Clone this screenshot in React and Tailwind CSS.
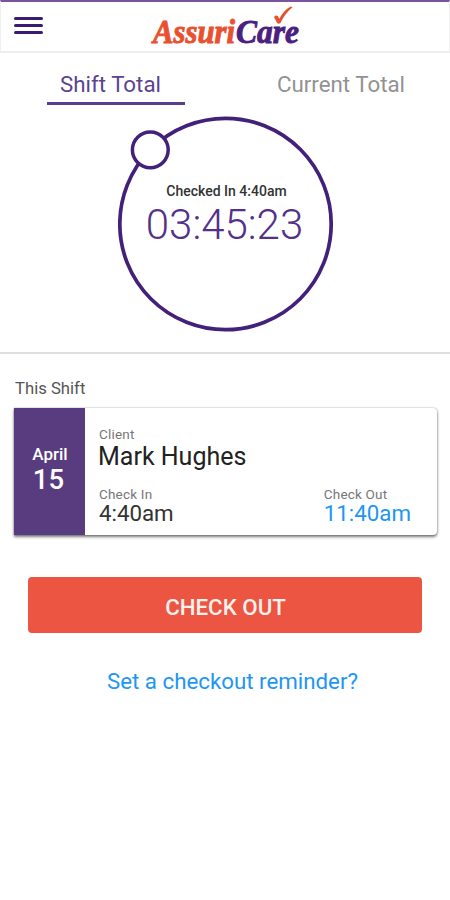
import React from 'react';

const shift = {
  month: 'April',
  day: '15',
  client: 'Mark Hughes',
  checkIn: '4:40am',
  checkOut: '11:40am',
};

const Logo = () => (
  <svg width="154" height="49" viewBox="0 0 154 49" className="overflow-visible">
    <text
      x="5"
      y="38.800"
      textLength="82"
      lengthAdjust="spacingAndGlyphs"
      className="font-['Liberation_Serif',serif] text-[33px] font-bold italic fill-[#e9502f] stroke-[#e9502f] stroke-[0.9]"
    >
      Assuri
    </text>
    <text
      x="88"
      y="38.800"
      textLength="63"
      lengthAdjust="spacingAndGlyphs"
      className="font-['Liberation_Serif',serif] text-[33px] font-bold italic fill-[#4b2080] stroke-[#4b2080] stroke-[0.9]"
    >
      Care
    </text>
    <path d="M126 13 Q128 10.700 129.800 12 L131.300 14.800 Q136 6 142.800 2.600 L144.500 3.200 Q136.500 10 132.500 19 Q130.300 20.800 128.800 18.600 Z" fill="#e9502f" />
  </svg>
);

const Header = () => (
  <header className="flex h-[53px] items-start border-t-2 border-b-2 border-t-[#7b549b] border-b-[#ededed] border-x border-x-[#f0f0f0] bg-white">
    <button className="ml-[13px] mt-[15px] flex w-[29px] flex-col gap-1">
      <span className="h-[3px] w-full rounded-xs bg-[#3a1b73]"></span>
      <span className="h-[3px] w-full rounded-xs bg-[#3a1b73]"></span>
      <span className="h-[3px] w-full rounded-xs bg-[#3a1b73]"></span>
    </button>
    <div className="ml-[105px] mt-[2px]">
      <Logo />
    </div>
  </header>
);

const Tabs = () => (
  <nav className="flex h-[52px] justify-between pl-[47px] pr-[40px] text-[22.300px] leading-[26px]">
    <button className="h-full w-[138px] border-b-[3px] border-[#593d8c] pt-[13px] pr-[11px] text-center text-[#5c4390]">
      Shift Total
    </button>
    <button className="h-full w-[138px] pt-[10px] text-center text-[#929292]">Current Total</button>
  </nav>
);

const Timer = () => (
  <section className="grid h-[249px] justify-center border-b-2 border-[#dedede]">
    <svg width="216" height="220" viewBox="0 0 216 220" className="col-start-1 row-start-1 mt-[10px] ml-px" fill="none" stroke="#43207a">
      <circle cx="107.500" cy="109" r="105.700" strokeWidth="3.700" />
      <circle cx="32.300" cy="34.800" r="17.900" strokeWidth="3.500" fill="white" />
    </svg>
    <div className="col-start-1 row-start-1 mt-[78px] text-center">
      <div className="ml-[3px] text-[14px] font-medium leading-4 text-[#333]">Checked In 4:40am</div>
      <div className="mr-px text-[42px] font-light leading-[51px] text-[#54308a]">03:45:23</div>
    </div>
  </section>
);

const Field = ({ label, value, className }) => (
  <div>
    <div className="text-[13.500px] leading-4 tracking-[0.2px] text-[#777]">{label}</div>
    <div className={className}>{value}</div>
  </div>
);

const ShiftCard = () => (
  <div className="ml-[14px] mr-[13px] flex h-[127px] overflow-hidden rounded-r-[4px] bg-white shadow-[0_2px_3px_rgba(0,0,0,0.5),0_0_2px_rgba(0,0,0,0.35)]">
    <div className="flex w-[71px] flex-col items-center bg-[#593c80] pt-[36px] font-medium text-white">
      <div className="ml-px text-[17px] leading-5">{shift.month}</div>
      <div className="mt-[2px] mr-[2px] text-[27.500px] leading-7">{shift.day}</div>
    </div>
    <div className="flex flex-1 flex-col pl-[14px] pr-[26px] pt-[18px]">
      <Field label="Client" value={shift.client} className="-ml-px text-[25px] leading-[30px] text-[#222]" />
      <div className="mt-[14px] flex justify-between">
        <Field label="Check In" value={shift.checkIn} className="text-[22.300px] leading-[23px] text-[#333]" />
        <Field label="Check Out" value={shift.checkOut} className="text-[22.300px] leading-[23px] text-[#1e96f5]" />
      </div>
    </div>
  </div>
);

export default function App() {
  return (
    <div className="h-[900px] w-[450px] overflow-hidden bg-white font-[Roboto,sans-serif]">
      <Header />
      <Tabs />
      <Timer />
      <h2 className="mb-[9px] mt-[25px] ml-[15px] text-[16.700px] leading-5 text-[#555]">This Shift</h2>
      <ShiftCard />
      <div className="mt-[42px] flex flex-col items-center">
        <button className="h-[56px] w-[394px] rounded-[4px] bg-[#eb5541] pt-[3px] pl-px text-[22.300px] font-medium leading-[26px] text-[#fff1ee]">
          CHECK OUT
        </button>
        <button className="mt-[35px] ml-[15px] text-[22.300px] leading-[26px] text-[#1e96f5]">Set a checkout reminder?</button>
      </div>
    </div>
  );
}
